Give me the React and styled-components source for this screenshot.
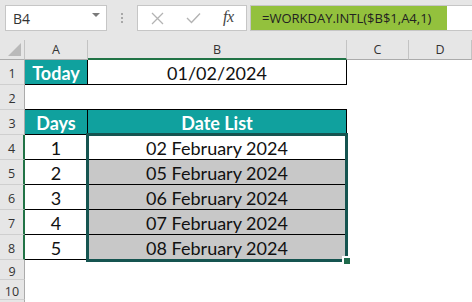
import React from "react";
import styled, { createGlobalStyle } from "styled-components";

const Global = createGlobalStyle`
  html, body { margin: 0; padding: 0; background: #ffffff; overflow: hidden; }
  * { box-sizing: border-box; }
`;

const Page = styled.div`
  width: 472px;
  height: 302px;
  overflow: hidden;
  background: #ffffff;
  font-family: Lato, "Open Sans", sans-serif;
`;

const FormulaBar = styled.div`
  height: 40px;
  background: #e6e6e6;
  display: flex;
  align-items: flex-start;
  padding: 5px 0 0 5px;
`;

const NameBox = styled.div`
  width: 102px;
  height: 26px;
  background: #fff;
  border: 1px solid #c6c6c6;
  display: flex;
  align-items: center;
  justify-content: space-between;
  padding: 0 6px 0 7px;
  font-family: "Open Sans", sans-serif;
  font-size: 14px;
  color: #333;
`;

const Caret = styled.span`
  width: 0;
  height: 0;
  border-left: 4px solid transparent;
  border-right: 4px solid transparent;
  border-top: 4px solid #7a7a7a;
  margin-top: -6px;
`;

const Dots = styled.div`
  width: 30px;
  height: 26px;
  display: flex;
  flex-direction: column;
  align-items: center;
  justify-content: center;
  gap: 2px;
  span {
    width: 2px;
    height: 2px;
    background: #a8a8a8;
  }
`;

const FxBox = styled.div`
  width: 110px;
  height: 26px;
  background: #fff;
  border: 1px solid #c6c6c6;
  display: flex;
  align-items: center;
  padding-left: 13px;
  gap: 22px;
`;

const FxLabel = styled.span`
  font-family: "Liberation Serif", serif;
  font-style: italic;
  font-size: 16px;
  color: #444;
  letter-spacing: -0.5px;
  margin-top: -2px;
`;

const FormulaInput = styled.div`
  flex: 1;
  height: 26px;
  margin-left: 3px;
  background: #fff;
  border: 1px solid #c6c6c6;
  border-right: none;
  display: flex;
  align-items: stretch;
`;

const FormulaText = styled.div`
  width: 196px;
  background: #93c13d;
  display: flex;
  align-items: center;
  padding-left: 11px;
  font-family: "Open Sans", sans-serif;
  font-size: 13px;
  color: #222;
  white-space: nowrap;
`;

const Sheet = styled.div`
  position: relative;
  display: grid;
  grid-template-columns: 25px 63px 259px 62px 63px;
  grid-template-rows: 20px repeat(8, 25px) 20px 20px 20px;
`;

const ColHead = styled.div`
  background: #e6e6e6;
  border-right: 1px solid #c3c3c3;
  border-bottom: ${(p) => (p.$active ? "2px solid #217346" : "1px solid #ababab")};
  display: flex;
  align-items: center;
  justify-content: center;
  font-family: "Open Sans", sans-serif;
  font-size: 12.5px;
  color: #333;
  padding-top: ${(p) => (p.$active ? "1px" : "0")};
`;

const Corner = styled.div`
  background: #e6e6e6;
  border-right: 1px solid #c3c3c3;
  border-bottom: 1px solid #ababab;
  position: relative;
  &::after {
    content: "";
    position: absolute;
    right: 3px;
    bottom: 3px;
    width: 0;
    height: 0;
    border-left: 13px solid transparent;
    border-bottom: 13px solid #b9b9b9;
  }
`;

const RowHead = styled.div`
  background: #e6e6e6;
  border-right: ${(p) => (p.$active ? "2px solid #217346" : "1px solid #ababab")};
  border-bottom: 1px solid #cfcfcf;
  display: flex;
  align-items: center;
  justify-content: center;
  font-family: "Open Sans", sans-serif;
  font-size: 12.5px;
  color: #333;
  padding-top: 3px;
`;

const Cell = styled.div`
  background: ${(p) => p.$fill || "#fff"};
  border-right: ${(p) => (p.$r ? "1px solid #000" : "none")};
  border-bottom: ${(p) => (p.$b ? "1px solid #000" : "none")};
  display: flex;
  align-items: center;
  justify-content: center;
  font-size: 18px;
  font-weight: ${(p) => (p.$bold ? 700 : 400)};
  color: ${(p) => (p.$bold ? "#fff" : "#111")};
  white-space: nowrap;
  padding-top: 1px;
`;

const Selection = styled.div`
  position: absolute;
  left: 86px;
  top: 93px;
  width: 262px;
  height: 129px;
  border: 3px solid #155450;
  pointer-events: none;
`;

const Handle = styled.div`
  position: absolute;
  right: -5px;
  bottom: -5px;
  width: 6px;
  height: 6px;
  background: #1f6a4c;
  box-shadow: -1px -1px 0 1px #fff;
`;

const TEAL = "#10a19e";
const GREY = "#c8c8c8";

const dateRows = [
  { d: 1, v: "02 February 2024", fill: "#fff" },
  { d: 2, v: "05 February 2024", fill: GREY },
  { d: 3, v: "06 February 2024", fill: GREY },
  { d: 4, v: "07 February 2024", fill: GREY },
  { d: 5, v: "08 February 2024", fill: GREY },
];

function CrossIcon() {
  return (
    <svg width="13" height="13" viewBox="0 0 13 13">
      <path d="M1 1 L12 12 M12 1 L1 12" stroke="#b3b3b3" strokeWidth="1.3" fill="none" />
    </svg>
  );
}

function CheckIcon() {
  return (
    <svg width="15" height="12" viewBox="0 0 15 12">
      <path d="M1 6 L5.5 10.5 L14 1.5" stroke="#b3b3b3" strokeWidth="1.4" fill="none" />
    </svg>
  );
}

export default function App() {
  return (
    <Page>
      <Global />
      <FormulaBar>
        <NameBox>
          <span>B4</span>
          <Caret />
        </NameBox>
        <Dots>
          <span />
          <span />
          <span />
        </Dots>
        <FxBox>
          <CrossIcon />
          <CheckIcon />
          <FxLabel>fx</FxLabel>
        </FxBox>
        <FormulaInput>
          <FormulaText>=WORKDAY.INTL($B$1,A4,1)</FormulaText>
        </FormulaInput>
      </FormulaBar>
      <Sheet>
        <Corner />
        <ColHead>A</ColHead>
        <ColHead $active>B</ColHead>
        <ColHead>C</ColHead>
        <ColHead>D</ColHead>

        <RowHead>1</RowHead>
        <Cell $fill={TEAL} $bold $r $b>Today</Cell>
        <Cell $r $b>01/02/2024</Cell>
        <Cell />
        <Cell />

        <RowHead>2</RowHead>
        <Cell $b />
        <Cell $b />
        <Cell />
        <Cell />

        <RowHead>3</RowHead>
        <Cell $fill={TEAL} $bold $r $b>Days</Cell>
        <Cell $fill={TEAL} $bold $r $b>Date List</Cell>
        <Cell />
        <Cell />

        {dateRows.map((r, i) => (
          <React.Fragment key={r.d}>
            <RowHead $active>{4 + i}</RowHead>
            <Cell $r $b>{r.d}</Cell>
            <Cell $fill={r.fill} $r $b>{r.v}</Cell>
            <Cell />
            <Cell />
          </React.Fragment>
        ))}

        <RowHead>9</RowHead>
        <Cell />
        <Cell />
        <Cell />
        <Cell />
        <RowHead>10</RowHead>
        <Cell />
        <Cell />
        <Cell />
        <Cell />
        <RowHead />
        <Cell />
        <Cell />
        <Cell />
        <Cell />

        <Selection>
          <Handle />
        </Selection>
      </Sheet>
    </Page>
  );
}
